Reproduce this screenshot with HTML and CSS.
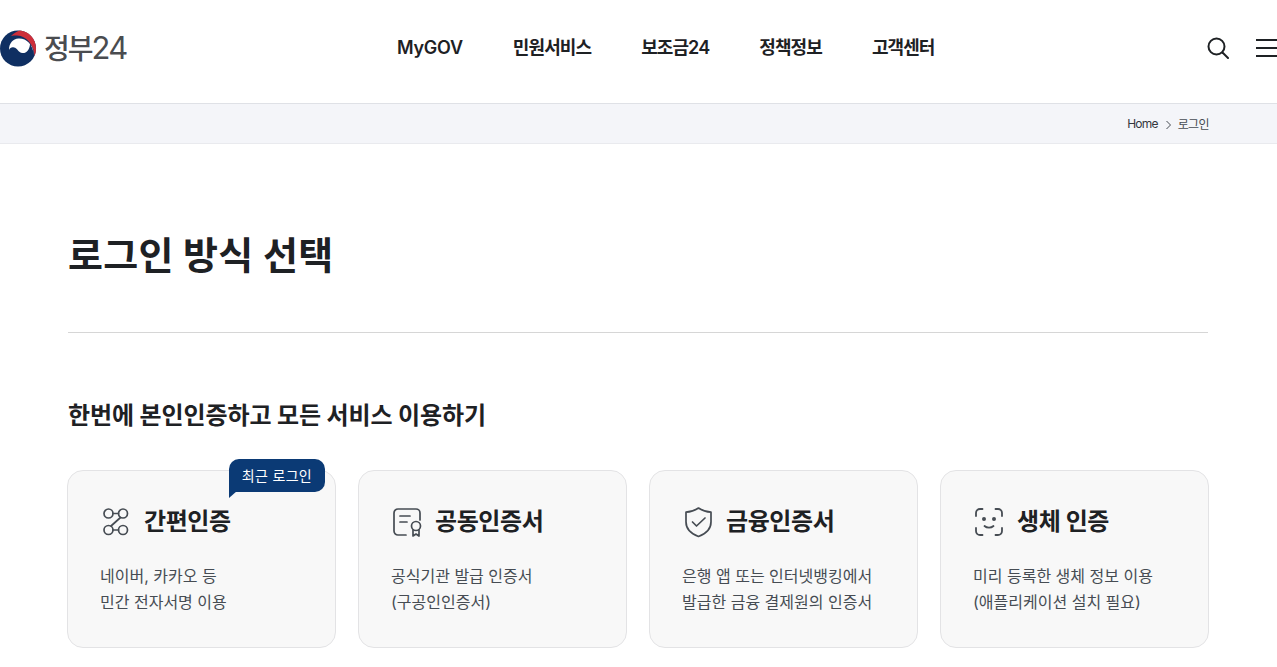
FILE: index.html
```html
<!DOCTYPE html>
<html lang="ko">
<head>
<meta charset="utf-8">
<title>로그인 방식 선택 | 정부24</title>
<link rel="stylesheet" href="styles.css">
</head>
<body>
<header class="site-header">
  <a class="logo" href="#">
    <svg class="logo-mark" width="37" height="37" viewBox="0 0 37 37" aria-hidden="true">
      <circle cx="18" cy="18.500" r="18" fill="#0f2f62"/>
      <path d="M9 20C9 13 13 9 18.500 8.500C26 8 33 14 33.800 25C33.500 20 32.500 16 30 14.500C29.500 20 26 23.500 22.500 23C18 22.500 17.500 18 14 17.500C11.500 17 10 18 9 20Z" fill="#fff"/>
      <path d="M11 6C14 3 17 1.500 20 .6C29 1.500 36 9 36 18.500C36 21 35.500 24 34.500 26C34.500 16 27 6 17 5.500C15 5.500 13 5.500 11 6Z" fill="#cd2e3a"/>
    </svg>
    <span class="logo-text">정부<span class="logo-num">24</span></span>
  </a>
  <nav class="main-nav">
    <a class="nav-latin" href="#">MyGOV</a>
    <a href="#">민원서비스</a>
    <a href="#">보조금24</a>
    <a href="#">정책정보</a>
    <a href="#">고객센터</a>
  </nav>
  <div class="header-tools">
    <svg class="search-icon" width="22" height="22" viewBox="0 0 22 22" fill="none" stroke="#1e2124" stroke-width="2" stroke-linecap="round" aria-label="검색">
      <circle cx="9.500" cy="9.500" r="8"/>
      <path d="m15.500 15.500 5.500 5.500"/>
    </svg>
    <div class="menu-icon" aria-label="메뉴"><span></span><span></span><span></span></div>
  </div>
</header>

<div class="breadcrumb">
  <span class="crumb-home">Home</span>
  <svg class="crumb-sep" width="7" height="10" viewBox="0 0 7 10" fill="none" stroke="#464c53" stroke-width="1"><path d="m1.500 1 4 4-4 4"/></svg>
  <span class="crumb-current">로그인</span>
</div>

<main class="content">
  <h1 class="page-title">로그인 방식 선택</h1>
  <h2 class="section-title">한번에 본인인증하고 모든 서비스 이용하기</h2>
  <div class="cards">
    <a class="card" href="#">
      <span class="badge">최근 로그인</span>
      <div class="card-head">
        <svg class="card-icon" width="32" height="32" viewBox="0 0 32 32" fill="none" stroke="#464c53" stroke-width="1.700" stroke-linecap="round">
          <circle cx="8.500" cy="7.500" r="4.500"/><circle cx="23" cy="7.500" r="4.500"/><circle cx="8.500" cy="24" r="4.500"/><circle cx="23" cy="24" r="4.500"/>
          <path d="M13 7.500H18.500M13 24H18.500M20.500 11.500 11 20"/>
        </svg>
        <h3>간편인증</h3>
      </div>
      <p>네이버, 카카오 등<br>민간 전자서명 이용</p>
    </a>
    <a class="card" href="#">
      <div class="card-head">
        <svg class="card-icon" width="32" height="32" viewBox="0 0 32 32" fill="none" stroke="#464c53" stroke-width="1.700" stroke-linecap="round" stroke-linejoin="round">
          <path d="M15 29H7a4 4 0 0 1-4-4V7a4 4 0 0 1 4-4h18a4 4 0 0 1 4 4v7"/>
          <path d="M9 10h10M9 16h7"/>
          <circle cx="25" cy="20" r="4.500"/>
          <path d="M22 24v6l3-2 3 2v-6"/>
        </svg>
        <h3>공동인증서</h3>
      </div>
      <p>공식기관 발급 인증서<br>(구공인인증서)</p>
    </a>
    <a class="card" href="#">
      <div class="card-head">
        <svg class="card-icon" width="32" height="32" viewBox="0 0 32 32" fill="none" stroke="#464c53" stroke-width="1.700" stroke-linecap="round" stroke-linejoin="round">
          <path d="M16.500 2C21 5 25 6 29 6.200V16c0 6.500-4.500 11.500-12.500 14.500C8.500 27.500 4 22.500 4 16V6.200C8 6 12 5 16.500 2Z"/>
          <path d="m10.500 16 4 4 8.500-8"/>
        </svg>
        <h3>금융인증서</h3>
      </div>
      <p>은행 앱 또는 인터넷뱅킹에서<br>발급한 금융 결제원의 인증서</p>
    </a>
    <a class="card" href="#">
      <div class="card-head">
        <svg class="card-icon" width="32" height="32" viewBox="0 0 32 32" fill="none" stroke="#464c53" stroke-width="1.800" stroke-linecap="round" stroke-linejoin="round">
          <path d="M3 10V7a4 4 0 0 1 4-4h2.500M22.500 3H25a4 4 0 0 1 4 4v3M3 22v3a4 4 0 0 0 4 4h2.500M22.500 29H25a4 4 0 0 0 4-4v-3"/>
          <path d="M11.500 20c2.500 2.300 6.500 2.300 9 0"/>
          <circle cx="11" cy="13" r="1.100" fill="#464c53"/><circle cx="21" cy="13" r="1.100" fill="#464c53"/>
        </svg>
        <h3>생체 인증</h3>
      </div>
      <p>미리 등록한 생체 정보 이용<br>(애플리케이션 설치 필요)</p>
    </a>
  </div>
</main>
</body>
</html>
```
FILE: styles.css
```css
* { box-sizing: border-box; }
html, body { margin: 0; padding: 0; }
body {
  font-family: Inter, "Noto Sans CJK KR", sans-serif;
  color: #1e2124;
  background: #fff;
  overflow: hidden;
}
a { color: inherit; text-decoration: none; }

.site-header {
  height: 103px;
  display: flex;
  align-items: center;
}
.logo {
  width: 397px;
  flex: none;
  display: flex;
  align-items: center;
  gap: 7px;
  padding-bottom: 7px;
}
.logo-mark { flex: none; }
.logo-text {
  font-size: 28px;
  font-weight: 500;
  color: #4a4c50;
  letter-spacing: -2px;
  line-height: 36px;
}
.logo-num { font-weight: 400; font-size: 31px; letter-spacing: -1.800px; }
.main-nav {
  display: flex;
  gap: 50px;
  font-size: 18px;
  font-weight: 600;
  letter-spacing: -0.9px;
  line-height: 26px;
  padding-bottom: 7px;
}
.nav-latin { letter-spacing: -0.25px; }
.header-tools {
  margin-left: auto;
  display: flex;
  align-items: center;
  gap: 27px;
  padding-bottom: 7px;
}
.menu-icon {
  width: 21px;
  display: flex;
  flex-direction: column;
  gap: 6px;
}
.menu-icon span { height: 2px; background: #1e2124; }

.breadcrumb {
  height: 41px;
  background: #f4f5f9;
  border-top: 1px solid #dfe1e6;
  border-bottom: 1px solid #e9eaee;
  display: flex;
  align-items: center;
  justify-content: flex-end;
  gap: 5px;
  padding-right: 68px;
  font-size: 12px;
  letter-spacing: -0.6px;
  color: #33363d;
}
.crumb-home { letter-spacing: -0.8px; }
.crumb-sep { margin: 2px 1px 0 2px; }
.crumb-current { color: #464c53; }

.content {
  padding: 0 69px 19px 68px;
}
.page-title {
  margin: 0;
  height: 189px;
  padding-top: 81px;
  border-bottom: 1px solid #d6d6d6;
  font-size: 38px;
  font-weight: 700;
  line-height: 60px;
  letter-spacing: 0.3px;
  color: #1e2124;
}
.section-title {
  margin: 65px 0 0;
  font-size: 24px;
  font-weight: 700;
  line-height: 36px;
  letter-spacing: -0.1px;
}
.cards {
  display: grid;
  grid-template-columns: repeat(4, 269px);
  gap: 22px;
  margin: 36px -2px 0 -1px;
}
.card {
  position: relative;
  height: 178px;
  background: #f8f8f8;
  border: 1px solid #e3e3e5;
  border-radius: 16px;
  padding: 33px 32px 0;
  display: block;
}
.card-head {
  display: flex;
  align-items: center;
  gap: 12px;
  height: 36px;
}
.card-icon { flex: none; width: 32px; height: 32px; }
.card-head h3 {
  margin: 0;
  font-size: 24px;
  font-weight: 700;
  line-height: 36px;
  letter-spacing: -0.4px;
  color: #1e2124;
}
.card p {
  margin: 23px 0 0;
  font-size: 16px;
  line-height: 26px;
  letter-spacing: 0;
  color: #464c53;
}
.badge {
  position: absolute;
  top: -12px;
  right: 10px;
  height: 33px;
  padding: 0 13px;
  background: #0b3a75;
  color: #fff;
  font-size: 14px;
  line-height: 33px;
  letter-spacing: 0.3px;
  border-radius: 10px 10px 10px 0;
}
.badge::after {
  content: "";
  position: absolute;
  left: 0;
  top: 32px;
  border-left: 8px solid #0b3a75;
  border-bottom: 7px solid transparent;
}
```
